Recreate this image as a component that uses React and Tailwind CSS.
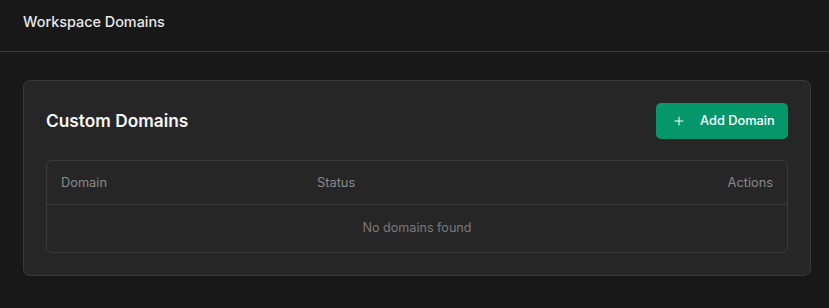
import React from 'react';
import { Plus } from 'lucide-react';

export default function App() {
  return (
    <div className="min-h-[308px] bg-[#181818] text-white" style={{ fontFamily: 'Inter, "Noto Sans", sans-serif' }}>
      <header className="h-[52px] border-b border-[#3a3a3a] px-[23px] pt-[11px]">
        <h1 className="text-[14.4px] leading-[21.6px] font-medium text-[#e8e8e8]">Workspace Domains</h1>
      </header>

      <div className="pt-[28px] pl-[23px] pr-[18px]">
        <div className="rounded-[7px] border border-[#3a3a3a] bg-[#262626] p-[22px]">
          <div className="flex items-center justify-between h-[36px]">
            <h2 className="text-[17.3px] font-semibold text-[#f5f5f5]">Custom Domains</h2>
            <button className="h-[36px] w-[132px] rounded-[5px] bg-[#05966a] flex items-center pl-[16px] gap-[14px] text-[12.8px] font-medium text-white">
              <Plus className="w-[14px] h-[14px]" strokeWidth={1.75} />
              Add Domain
            </button>
          </div>

          <div className="mt-[21px] rounded-[6px] border border-[#3a3a3a]">
            <div className="flex items-center h-[44px] border-b border-[#3a3a3a] px-[14px] text-[12.8px] text-[#8a8a8a]">
              <div className="w-[256px]">Domain</div>
              <div className="flex-1">Status</div>
              <div className="text-right">Actions</div>
            </div>
            <div className="h-[47px] flex items-center justify-center text-[12.6px] text-[#7a7a7a]">
              No domains found
            </div>
          </div>
        </div>
      </div>
    </div>
  );
}
